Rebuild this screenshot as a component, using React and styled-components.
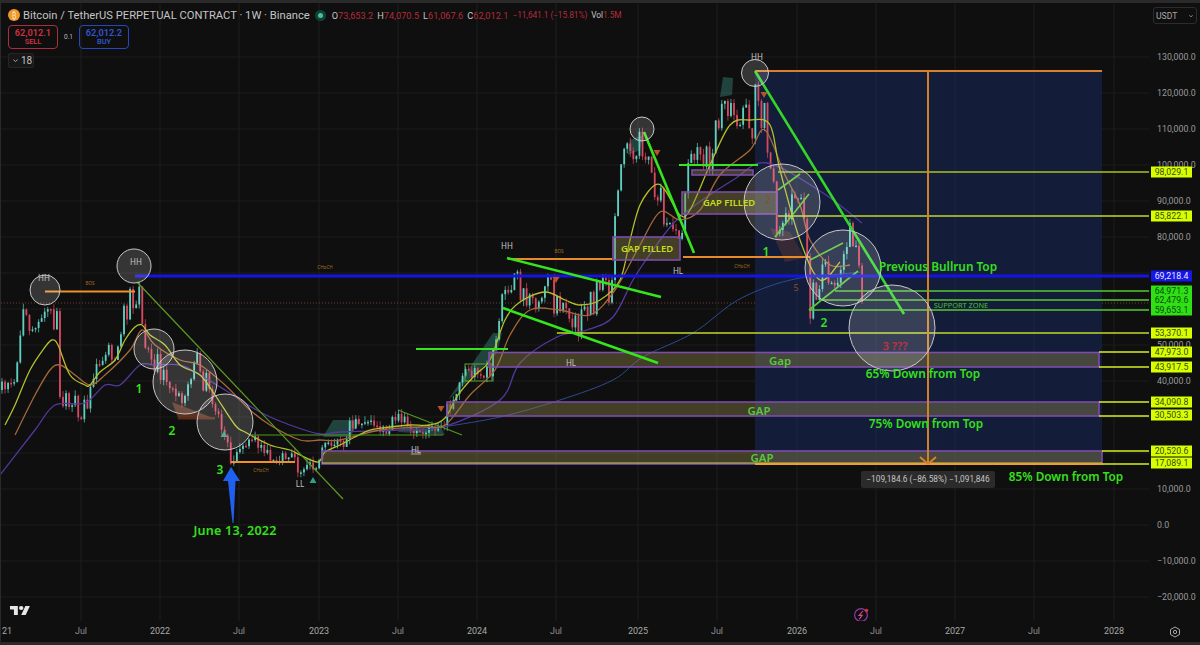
import React from "react";
import styled, { createGlobalStyle } from "styled-components";

const GlobalStyle = createGlobalStyle`
    html, body { margin: 0; background: #2a2a2a; }
    body { font-family: Roboto, "Noto Sans", sans-serif; overflow: hidden; }
    svg text { font-family: "Noto Sans", "Open Sans", sans-serif; }
`;

//#region data
const priceToY = (price) => 525 - (price / 10000) * 36;

const GRID_X = [81, 160, 239, 319, 398, 477, 556, 638, 717, 797, 876, 955, 1034, 1114];
const GRID_PRICES = [130, 120, 110, 100, 90, 80, 70, 60, 50, 40, 30, 20, 10, 0, -10, -20];

const TIME_LABELS = [
    ["21", 7, true], ["Jul", 81], ["2022", 160, true], ["Jul", 239], ["2023", 319, true],
    ["Jul", 398], ["2024", 477, true], ["Jul", 556], ["2025", 638, true], ["Jul", 717],
    ["2026", 797, true], ["Jul", 876], ["2027", 955, true], ["Jul", 1034], ["2028", 1114, true],
];

const PLAIN_PRICES = [
    ["130,000.0", 130000], ["120,000.0", 120000], ["110,000.0", 110000], ["100,000.0", 100000],
    ["90,000.0", 90000], ["80,000.0", 80000], ["50,000.0", 50000], ["40,000.0", 40000],
    ["10,000.0", 10000], ["0.0", 0], ["−10,000.0", -10000], ["−20,000.0", -20000],
];

const TAGS = [
    ["98,029.1", 98029, "yellow"], ["85,822.1", 85822, "yellow"], ["69,218.4", 69218, "blue"],
    ["64,971.3", 64971, "green"], ["62,479.6", 62479, "green"], ["59,653.1", 59653, "green"],
    ["53,370.1", 53370, "yellow"], ["47,973.0", 47973, "yellow"], ["43,917.5", 43917, "yellow"],
    ["34,090.8", 34090, "yellow"], ["30,503.3", 30503, "yellow"], ["20,520.6", 20520, "yellow"],
    ["17,089.1", 17089, "yellow"],
];

const CLOSE_PATH = [
    [2, 390], [17, 360], [20, 320], [32, 312], [45, 305], [57, 315], [60, 395], [70, 387], [85, 405],
    [90, 385], [100, 355], [108, 340], [115, 365], [122, 320], [128, 300], [135, 285], [139, 290],
    [145, 345], [155, 355], [165, 375], [175, 385], [190, 385], [197, 360], [210, 385], [215, 410],
    [225, 425], [229, 445], [231, 460], [235, 455], [245, 445], [255, 437], [265, 452], [280, 457],
    [294, 452], [297, 468], [305, 466], [318, 463], [322, 448], [335, 440], [345, 445], [348, 423],
    [365, 418], [372, 418], [380, 428], [390, 432], [392, 413], [400, 415], [415, 428], [430, 428],
    [443, 425], [447, 407], [457, 390], [465, 370], [480, 370], [490, 367], [493, 353], [502, 300],
    [507, 277], [515, 270], [523, 290], [533, 300], [545, 273], [557, 303], [563, 287], [573, 313],
    [583, 320], [590, 300], [603, 283], [612, 280], [613, 240], [615, 227], [617, 173], [625, 150],
    [633, 137], [642, 140], [648, 163], [655, 183], [662, 200], [663, 225], [672, 220], [682, 217],
    [683, 190], [692, 150], [698, 137], [707, 157], [715, 133], [720, 97], [725, 97], [733, 97],
    [737, 120], [747, 110], [753, 123], [755, 83], [758, 103], [765, 113], [773, 183], [777, 227],
    [780, 207], [788, 208], [795, 197], [802, 187], [805, 207], [808, 257], [810, 300], [817, 283],
    [825, 267], [830, 283], [840, 260], [850, 230], [857, 250], [860, 262], [863, 302],
];

const MA_LINES = [
    { color: "#2c4a94", width: 1, points: [[443, 427], [500, 417], [560, 400], [613, 380], [643, 357], [693, 333], [733, 303], [767, 287], [800, 278], [830, 275], [862, 272]] },
    { color: "#54389f", width: 1.3, points: [[0, 475], [35, 430], [55, 405], [85, 403], [105, 385], [120, 385], [140, 365], [155, 365], [180, 365], [200, 375], [225, 390], [260, 412], [290, 425], [320, 434], [340, 432], [400, 430], [443, 427], [500, 400], [520, 363], [557, 337], [587, 330], [613, 317], [633, 280], [653, 250], [680, 217], [733, 180], [767, 163], [823, 193], [862, 223]] },
    { color: "#a5683a", width: 1.3, points: [[15, 435], [35, 395], [50, 370], [60, 365], [75, 375], [90, 385], [105, 375], [130, 350], [142, 330], [155, 345], [180, 360], [200, 365], [225, 385], [250, 410], [270, 425], [300, 440], [320, 440], [340, 440], [380, 430], [420, 427], [445, 425], [470, 395], [495, 370], [510, 335], [530, 310], [560, 310], [590, 315], [615, 290], [640, 245], [660, 212], [680, 220], [700, 210], [720, 175], [750, 150], [765, 130], [785, 175], [800, 205], [810, 240], [830, 265], [850, 265]] },
    { color: "#b4c02c", width: 1.3, points: [[5, 425], [15, 405], [30, 370], [45, 347], [52, 340], [58, 345], [70, 375], [85, 385], [90, 385], [100, 372], [115, 360], [125, 340], [135, 327], [142, 325], [150, 335], [165, 345], [180, 365], [200, 375], [215, 395], [235, 425], [245, 432], [270, 445], [290, 450], [300, 455], [318, 462], [325, 452], [340, 445], [355, 437], [370, 430], [390, 427], [410, 425], [430, 425], [445, 418], [458, 395], [475, 375], [490, 360], [505, 320], [520, 302], [545, 292], [565, 300], [580, 305], [600, 300], [620, 280], [630, 240], [640, 205], [655, 185], [665, 190], [680, 215], [690, 210], [710, 165], [730, 125], [750, 120], [770, 125], [780, 170], [800, 240], [820, 280], [840, 262]] },
];

const TREND_FILLS = [
    "323,437 333,420 360,420 350,437", "448,400 493,333 502,333 497,353", "628,155 630,140 643,135 640,150",
    "720,97 723,77 733,78 732,95", "398,432 405,425 440,426 445,435",
];

const GAPS = [
    [489, 352.5, 610, 14.5], [447, 402, 652, 14], [322, 451, 780, 13], [682, 192, 95, 22],
    [692, 170, 61, 5], [613, 237, 67, 23],
];

const SEGMENTS = [
    // thin trend lines
    [137, 282, 343, 499, "#5e9c22", 1.2], [250, 435, 443, 435, "#4f9a22", 1.2], [398, 410, 462, 435, "#4f9a22", 1.2],
    [778, 190, 800, 174, "#58c832", 1.6], [775, 237, 809, 194, "#58c832", 1.6],
    [810, 260, 843, 243, "#58c832", 1.6], [809, 310, 858, 271, "#58c832", 1.6],
    // level lines
    [778, 172, 1151, 172, "#a9c322", 1.5], [778, 216, 1151, 216, "#c5d82a", 1.5], [557, 333, 1151, 333, "#c5d82a", 1.5],
    [835, 291, 1151, 291, "#58c832", 1.5], [820, 300, 1151, 300, "#58c832", 1.5], [809, 310, 1151, 310, "#58c832", 1.5],
    [1099, 352, 1151, 352, "#d8ef20", 1.5], [1099, 367, 1151, 367, "#d8ef20", 1.5], [1099, 402, 1151, 402, "#d8ef20", 1.5],
    [1099, 416, 1151, 416, "#d8ef20", 1.5], [1102, 451, 1151, 451, "#d8ef20", 1.5], [1102, 464, 1151, 464, "#d8ef20", 1.5],
    [322, 463, 1102, 463, "#c5c860", 1.2],
    // structure lines
    [135, 276, 1151, 276, "#1414e6", 3], [45, 291.5, 135, 291.5, "#f0902a", 2], [508, 259, 612, 259, "#e68a2a", 2],
    [683, 257, 810, 257, "#e68a2a", 2], [231, 462, 295, 462, "#f0902a", 2],
    // measure tool
    [755, 71, 1102, 71, "#d9812a", 2], [928, 71, 928, 464, "#d08028", 2], [755, 464, 1102, 464, "#f0a02a", 2],
    [920, 457, 928, 464, "#d9812a", 2], [936, 457, 928, 464, "#d9812a", 2],
    // thick drawn lines
    [644, 132, 694, 253, "#35e51d", 2.6], [679, 165, 758, 165, "#35e51d", 2.2], [755, 71, 904, 314, "#35d62a", 2.6],
    [507, 258, 661, 297, "#35e51d", 2.6], [503, 308, 658, 363, "#35e51d", 2.6], [416, 349, 508, 349, "#35e51d", 2.2],
];

const CIRCLES = [
    [45, 290, 15], [134, 266, 17], [154, 349, 20], [185, 382, 32], [225, 422, 28], [642, 129, 12],
    [755, 73, 13.5], [782, 202, 38], [843, 268, 38], [892, 328, 43],
];

const TRIANGLES = [
    [441, 409, "down", "#b8512c"], [556, 280, "down", "#b8512c"], [657, 153, "down", "#b8512c"],
    [764, 95, "down", "#b8512c"], [224, 434, "up", "#2f9f86"], [313, 480, "up", "#2f9f86"],
];

const LABELS = [
    ["HH", 44, 281, "tag"], ["HH", 136, 265, "tag"], ["HH", 507, 249, "tag"], ["HH", 757, 60, "tag"],
    ["HL", 678, 274, "tag"], ["HL", 571, 366, "tag"], ["HL", 416, 453, "tag"], ["LL", 300, 487, "tag"],
    ["BOS", 90, 285, "micro"], ["BOS", 559, 253, "micro"], ["CHoCH", 325, 269, "micro"], ["CHoCH", 742, 268, "micro"], ["CHoCH", 261, 472, "micro"],
    ["1", 139, 393, "count"], ["2", 172, 435, "count"], ["3", 220, 474, "count"], ["1", 766, 256, "count"], ["2", 824, 327, "count"],
    ["5", 796, 291, "faint"], ["2", 768, 203, "faint"],
    ["3 ???", 895, 350, "warn"],
    ["GAP FILLED", 647, 252, "filled"], ["GAP FILLED", 729, 206, "filled"],
    ["Gap", 780, 365, "gap"], ["GAP", 759, 415, "gap"], ["GAP", 762, 462, "gap"],
    ["Previous Bullrun Top", 938, 271, "note"], ["65% Down from Top", 923, 378, "note"], ["75% Down from Top", 926, 428, "note"],
    ["85% Down from Top", 1066, 481, "note"], ["June 13, 2022", 235, 535, "date"],
    ["SUPPORT ZONE", 961, 308, "zone"],
];

const interpolate = (points, x) => {
    for (let i = 1; i < points.length; i++) {
        const [x0, y0] = points[i - 1];
        const [x1, y1] = points[i];
        if (x <= x1) return y0 + ((y1 - y0) * (x - x0)) / (x1 - x0);
    }
    return points[points.length - 1][1];
};

// small seeded generator so the candles never change between renders
const seeded = (seed) => () => {
    seed = (seed * 1664525 + 1013904223) % 4294967296;
    return seed / 4294967296;
};

// quiet stretch in 2022-2023, wide swings everywhere else
const swingAt = (x) => (x < 230 ? 30 : x < 445 ? 11 : x < 500 ? 14 : 32);

const buildCandles = () => {
    const random = seeded(2021);
    const candles = [];
    let prev = interpolate(CLOSE_PATH, 2);
    for (let x = 2; x <= 863; x += 3.05) {
        const close = x > 860 ? 302 : interpolate(CLOSE_PATH, x) + (random() - 0.3) * swingAt(x);
        const top = Math.min(prev, close);
        const bottom = Math.max(prev, close);
        candles.push({
            x,
            up: close < prev,
            top,
            height: Math.max(bottom - top, 1.5),
            high: top - random() * 6,
            low: bottom + random() * 6,
        });
        prev = close;
    }
    return candles;
};

const CANDLES = buildCandles();

// catmull-rom through the points, so the averages bend like real moving averages
const smoothPath = (points) => {
    let d = `M${points[0][0]} ${points[0][1]}`;
    for (let i = 0; i < points.length - 1; i++) {
        const p0 = points[i - 1] || points[i];
        const p1 = points[i];
        const p2 = points[i + 1];
        const p3 = points[i + 2] || p2;
        const c1x = p1[0] + (p2[0] - p0[0]) / 6;
        const c1y = p1[1] + (p2[1] - p0[1]) / 6;
        const c2x = p2[0] - (p3[0] - p1[0]) / 6;
        const c2y = p2[1] - (p3[1] - p1[1]) / 6;
        d += `C${c1x} ${c1y} ${c2x} ${c2y} ${p2[0]} ${p2[1]}`;
    }
    return d;
};
//#endregion data

const Page = styled.div`
    width: 1200px;
    height: 645px;
    box-sizing: border-box;
    padding: 3px 0 3px 1px;
    background: #2a2a2a;
`;

const Frame = styled.div`
    display: grid;
    grid-template-columns: 1148px 1fr;
    grid-template-rows: 1fr 21px;
    height: 100%;
    background: #0f0f0f;
    color: #a0a0a0;
`;

const Plot = styled.div`
    position: relative;
    overflow: hidden;
`;

const ChartSvg = styled.svg`
    display: block;
    width: 1148px;
    height: 618px;
`;

const Legend = styled.div`
    position: absolute;
    top: 4px;
    left: 7px;
    display: flex;
    flex-direction: column;
    align-items: flex-start;
`;

const SymbolRow = styled.div`
    display: flex;
    align-items: center;
    height: 16px;
    font-size: 11.2px;
    white-space: nowrap;
`;

const CoinIcon = styled.span`
    display: flex;
    align-items: center;
    justify-content: center;
    width: 12px;
    height: 12px;
    margin-right: 3px;
    border-radius: 50%;
    background: #f0962a;
    color: #ffe3b8;
    font-size: 8px;
`;

const SymbolName = styled.span`
    color: #c4c4c4;
`;

const StatusDot = styled.span`
    width: 5px;
    height: 5px;
    margin: 0 9px 0 8px;
    border-radius: 50%;
    background: #48c0a0;
    box-shadow: 0 0 0 3px #14403a;
`;

const Ohlc = styled.span`
    margin-right: 4px;
    color: #c4c4c4;
    font-size: ${({ $tight }) => ($tight ? "8.4px" : "9.2px")};
    letter-spacing: ${({ $tight }) => ($tight ? "-0.1px" : "0")};
`;

const OhlcValue = styled.span`
    color: #b52b3a;
`;

const TradeRow = styled.div`
    display: flex;
    align-items: center;
    margin-top: 2px;
`;

const TradeButton = styled.div`
    box-sizing: border-box;
    width: 50px;
    height: 24px;
    border: 1px solid ${({ $side }) => ($side === "buy" ? "#2648b8" : "#a8303e")};
    border-radius: 4px;
    color: ${({ $side }) => ($side === "buy" ? "#2f55d0" : "#d03040")};
    font-size: 9.2px;
    font-weight: 600;
    line-height: 10px;
    text-align: center;
    padding-top: 2px;
`;

const TradeCaption = styled.div`
    font-size: 7.4px;
    line-height: 8px;
`;

const Spread = styled.span`
    width: 21px;
    color: #b8b8b8;
    font-size: 6.5px;
    text-align: center;
`;

const CollapseBox = styled.div`
    display: flex;
    align-items: center;
    gap: 3px;
    box-sizing: border-box;
    width: 26px;
    height: 15px;
    margin-top: 4px;
    padding-left: 4px;
    border: 1px solid #262626;
    border-radius: 2px;
    background: #171717;
    color: #c0c0c0;
    font-size: 10px;
`;

const MeasureTip = styled.div`
    position: absolute;
    top: 468px;
    left: 860px;
    width: 134px;
    height: 17px;
    border-radius: 2px;
    background: #2b2b2b;
    color: #c4c4c4;
    font-size: 8.3px;
    line-height: 17px;
    text-align: center;
    white-space: nowrap;
`;

const PriceAxis = styled.div`
    position: relative;
    overflow: visible;
`;

const CurrencyBox = styled.div`
    position: absolute;
    top: 4px;
    right: 3px;
    display: flex;
    align-items: center;
    justify-content: space-between;
    box-sizing: border-box;
    width: 44px;
    height: 17px;
    padding: 0 3px 0 2px;
    border: 1px solid #2c2c2c;
    border-radius: 3px;
    color: #a8a8a8;
    font-size: 8.6px;
`;

const PriceText = styled.span`
    position: absolute;
    left: 8px;
    transform: translateY(-50%);
    color: #9a9a9a;
    font-size: 8.8px;
    white-space: nowrap;
`;

const tagColors = {
    yellow: ["#d8ff00", "#3a4a10"],
    green: ["#2fe014", "#0d4a10"],
    blue: ["#1616e8", "#e8e8ff"],
};

const PriceTag = styled.span`
    position: absolute;
    left: 2px;
    width: 41px;
    height: 11px;
    transform: translateY(-50%);
    background: ${({ $kind }) => tagColors[$kind][0]};
    color: ${({ $kind }) => tagColors[$kind][1]};
    font-size: 8.8px;
    line-height: 11px;
    text-align: center;
    z-index: 1;
`;

const TimeAxis = styled.div`
    position: relative;
    overflow: hidden;
`;

const TimeText = styled.span`
    position: absolute;
    top: 5px;
    transform: translateX(-50%);
    color: ${({ $year }) => ($year ? "#a8a8a8" : "#8e8e8e")};
    font-size: 9px;
`;

const Corner = styled.div`
    display: flex;
    align-items: center;
    padding-left: 20px;
`;

const labelStyles = {
    tag: { fontSize: 8, fill: "#c4c4c4" },
    micro: { fontSize: 4.6, fill: "#a8701e" },
    count: { fontSize: 12, fill: "#3ae020", fontWeight: 600 },
    faint: { fontSize: 9, fill: "#8a4a2e" },
    warn: { fontSize: 11.4, fill: "#c23040", fontWeight: 600 },
    filled: { fontSize: 9.4, fill: "#c8dc1e", fontWeight: 600 },
    gap: { fontSize: 11.4, fill: "#5ac83a", fontWeight: 600 },
    note: { fontSize: 11.8, fill: "#36e01c", fontWeight: 600 },
    date: { fontSize: 12.6, fill: "#36e01c", fontWeight: 600, letterSpacing: 0.2 },
    zone: { fontSize: 7.4, fill: "#4cc030" },
};

const Candles = () =>
    CANDLES.map((c) => {
        const color = c.up ? "#5fcfc0" : "#d84860";
        return (
            <g key={c.x} fill={color} stroke={color}>
                <line x1={c.x} x2={c.x} y1={c.high} y2={c.low} strokeWidth="0.7" />
                <rect x={c.x - 0.9} y={c.top} width="1.8" height={c.height} stroke="none" />
            </g>
        );
    });

const Chart = () => (
    <ChartSvg viewBox="1 3 1148 618">
        {GRID_X.map((x) => (
            <line key={x} x1={x} x2={x} y1="3" y2="621" stroke="#1e1e1e" />
        ))}
        {GRID_PRICES.map((p) => (
            <line key={p} x1="1" x2="1149" y1={priceToY(p * 1000)} y2={priceToY(p * 1000)} stroke="#1c1c1c" />
        ))}
        <line x1="1" x2="1149" y1="303" y2="303" stroke="#7a3a34" strokeDasharray="1 2" />

        <rect x="755" y="71" width="347" height="393" fill="#131c38" />
        {GRID_X.filter((x) => x > 755 && x < 1102).map((x) => (
            <line key={x} x1={x} x2={x} y1="71" y2="464" stroke="#1c2540" />
        ))}

        {TREND_FILLS.map((points) => (
            <polygon key={points} points={points} fill="#3c9c88" opacity="0.38" />
        ))}
        <polygon points="172,402 213,418 178,418" fill="#8a4a2e" opacity="0.6" />
        <rect x="178" y="417" width="37" height="2.5" fill="#5a2a1a" />
        <polygon points="805,258 790,232 770,228 785,262" fill="#8a4a2e" opacity="0.3" />
        <rect x="465" y="364" width="27" height="17" fill="none" stroke="#5ca82a" />

        <Candles />

        {MA_LINES.map((ma) => (
            <path key={ma.color} d={smoothPath(ma.points)} fill="none" stroke={ma.color} strokeWidth={ma.width} />
        ))}

        {GAPS.map(([x, y, w, h]) => (
            <rect key={`${x}-${y}`} x={x} y={y} width={w} height={h} fill="#8c8448" fillOpacity="0.42" stroke="#7c4cae" strokeWidth="1.6" />
        ))}

        {SEGMENTS.map(([x1, y1, x2, y2, color, width]) => (
            <line key={`${x1}-${y1}-${x2}-${y2}`} x1={x1} y1={y1} x2={x2} y2={y2} stroke={color} strokeWidth={width} />
        ))}

        {TRIANGLES.map(([x, y, dir, color]) => (
            <polygon
                key={`${x}-${y}`}
                points={dir === "down" ? `${x - 3.5},${y - 3} ${x + 3.5},${y - 3} ${x},${y + 3}` : `${x - 3.5},${y + 3} ${x + 3.5},${y + 3} ${x},${y - 3}`}
                fill={color}
            />
        ))}

        {CIRCLES.map(([cx, cy, r]) => (
            <circle key={`${cx}-${cy}`} cx={cx} cy={cy} r={r} fill="#ffffff" fillOpacity="0.16" stroke="#c8c8c8" strokeWidth="1" />
        ))}

        <polygon points="231,467 240,481 235.5,481 233.5,523 232.5,523 228,481 223,481" fill="#2060f0" />

        {LABELS.map(([text, x, y, kind]) => (
            <text key={`${text}-${x}`} x={x} y={y} textAnchor="middle" style={labelStyles[kind]}>
                {text}
            </text>
        ))}
        <line x1="411" x2="421" y1="454" y2="454" stroke="#c4c4c4" strokeWidth="0.8" />

        {/* tradingview mark */}
        <g transform="translate(10 604) scale(0.56 0.5)" fill="#e6e6e6">
            <path d="M14 22H7V11H0V4h14v18zM28 22h-8l7.5-18h8L28 22z" />
            <circle cx="20" cy="8" r="4" />
        </g>

        {/* bolt badge */}
        <circle cx="861" cy="615" r="6.4" fill="none" stroke="#8f3aa8" strokeWidth="1.2" />
        <path d="M863 611l-4 4.4h3.2l-3 3.8" fill="none" stroke="#d84a90" strokeWidth="1.1" />
        <circle cx="866.5" cy="610.5" r="1.7" fill="#e03040" />
    </ChartSvg>
);

const SettingsIcon = () => (
    <svg width="12" height="12" viewBox="0 0 12 12" fill="none" stroke="#a8a8a8" strokeWidth="1">
        <path d="M6 1l4.5 2.5v5L6 11 1.5 8.5v-5z" />
        <circle cx="6" cy="6" r="1.7" />
    </svg>
);

const Chevron = ({ size = 5, color = "#c0c0c0" }) => (
    <svg width={size} height={size} viewBox="0 0 6 6" fill="none" stroke={color} strokeWidth="1">
        <path d="M0.5 2l2.5 2.2L5.5 2" />
    </svg>
);

const OHLC = [["O", "73,653.2"], ["H", "74,070.5"], ["L", "61,067.6"], ["C", "62,012.1"]];

const App = () => (
    <Page>
        <GlobalStyle />
        <Frame>
            <Plot>
                <Chart />
                <Legend>
                    <SymbolRow>
                        <CoinIcon>₿</CoinIcon>
                        <SymbolName>Bitcoin / TetherUS PERPETUAL CONTRACT · 1W · Binance</SymbolName>
                        <StatusDot />
                        {OHLC.map(([key, value]) => (
                            <Ohlc key={key}>
                                {key}
                                <OhlcValue>{value}</OhlcValue>
                            </Ohlc>
                        ))}
                        <Ohlc $tight>
                            <OhlcValue>−11,641.1 (−15.81%)</OhlcValue>
                        </Ohlc>
                        <Ohlc $tight>
                            Vol<OhlcValue>1.5M</OhlcValue>
                        </Ohlc>
                    </SymbolRow>
                    <TradeRow>
                        <TradeButton $side="sell">
                            62,012.1
                            <TradeCaption>SELL</TradeCaption>
                        </TradeButton>
                        <Spread>0.1</Spread>
                        <TradeButton $side="buy">
                            62,012.2
                            <TradeCaption>BUY</TradeCaption>
                        </TradeButton>
                    </TradeRow>
                    <CollapseBox>
                        <Chevron />
                        18
                    </CollapseBox>
                </Legend>
                <MeasureTip>−109,184.6 (−86.58%) −1,091,846</MeasureTip>
            </Plot>
            <PriceAxis>
                <CurrencyBox>
                    USDT
                    <Chevron size={4} />
                </CurrencyBox>
                {PLAIN_PRICES.map(([text, price]) => (
                    <PriceText key={text} style={{ top: priceToY(price) - 3 }}>
                        {text}
                    </PriceText>
                ))}
                {TAGS.map(([text, price, kind]) => (
                    <PriceTag key={text} $kind={kind} style={{ top: priceToY(price) - 3 }}>
                        {text}
                    </PriceTag>
                ))}
            </PriceAxis>
            <TimeAxis>
                {TIME_LABELS.map(([text, x, year]) => (
                    <TimeText key={x} $year={year} style={{ left: x - 1 }}>
                        {text}
                    </TimeText>
                ))}
            </TimeAxis>
            <Corner>
                <SettingsIcon />
            </Corner>
        </Frame>
    </Page>
);

export default App;
